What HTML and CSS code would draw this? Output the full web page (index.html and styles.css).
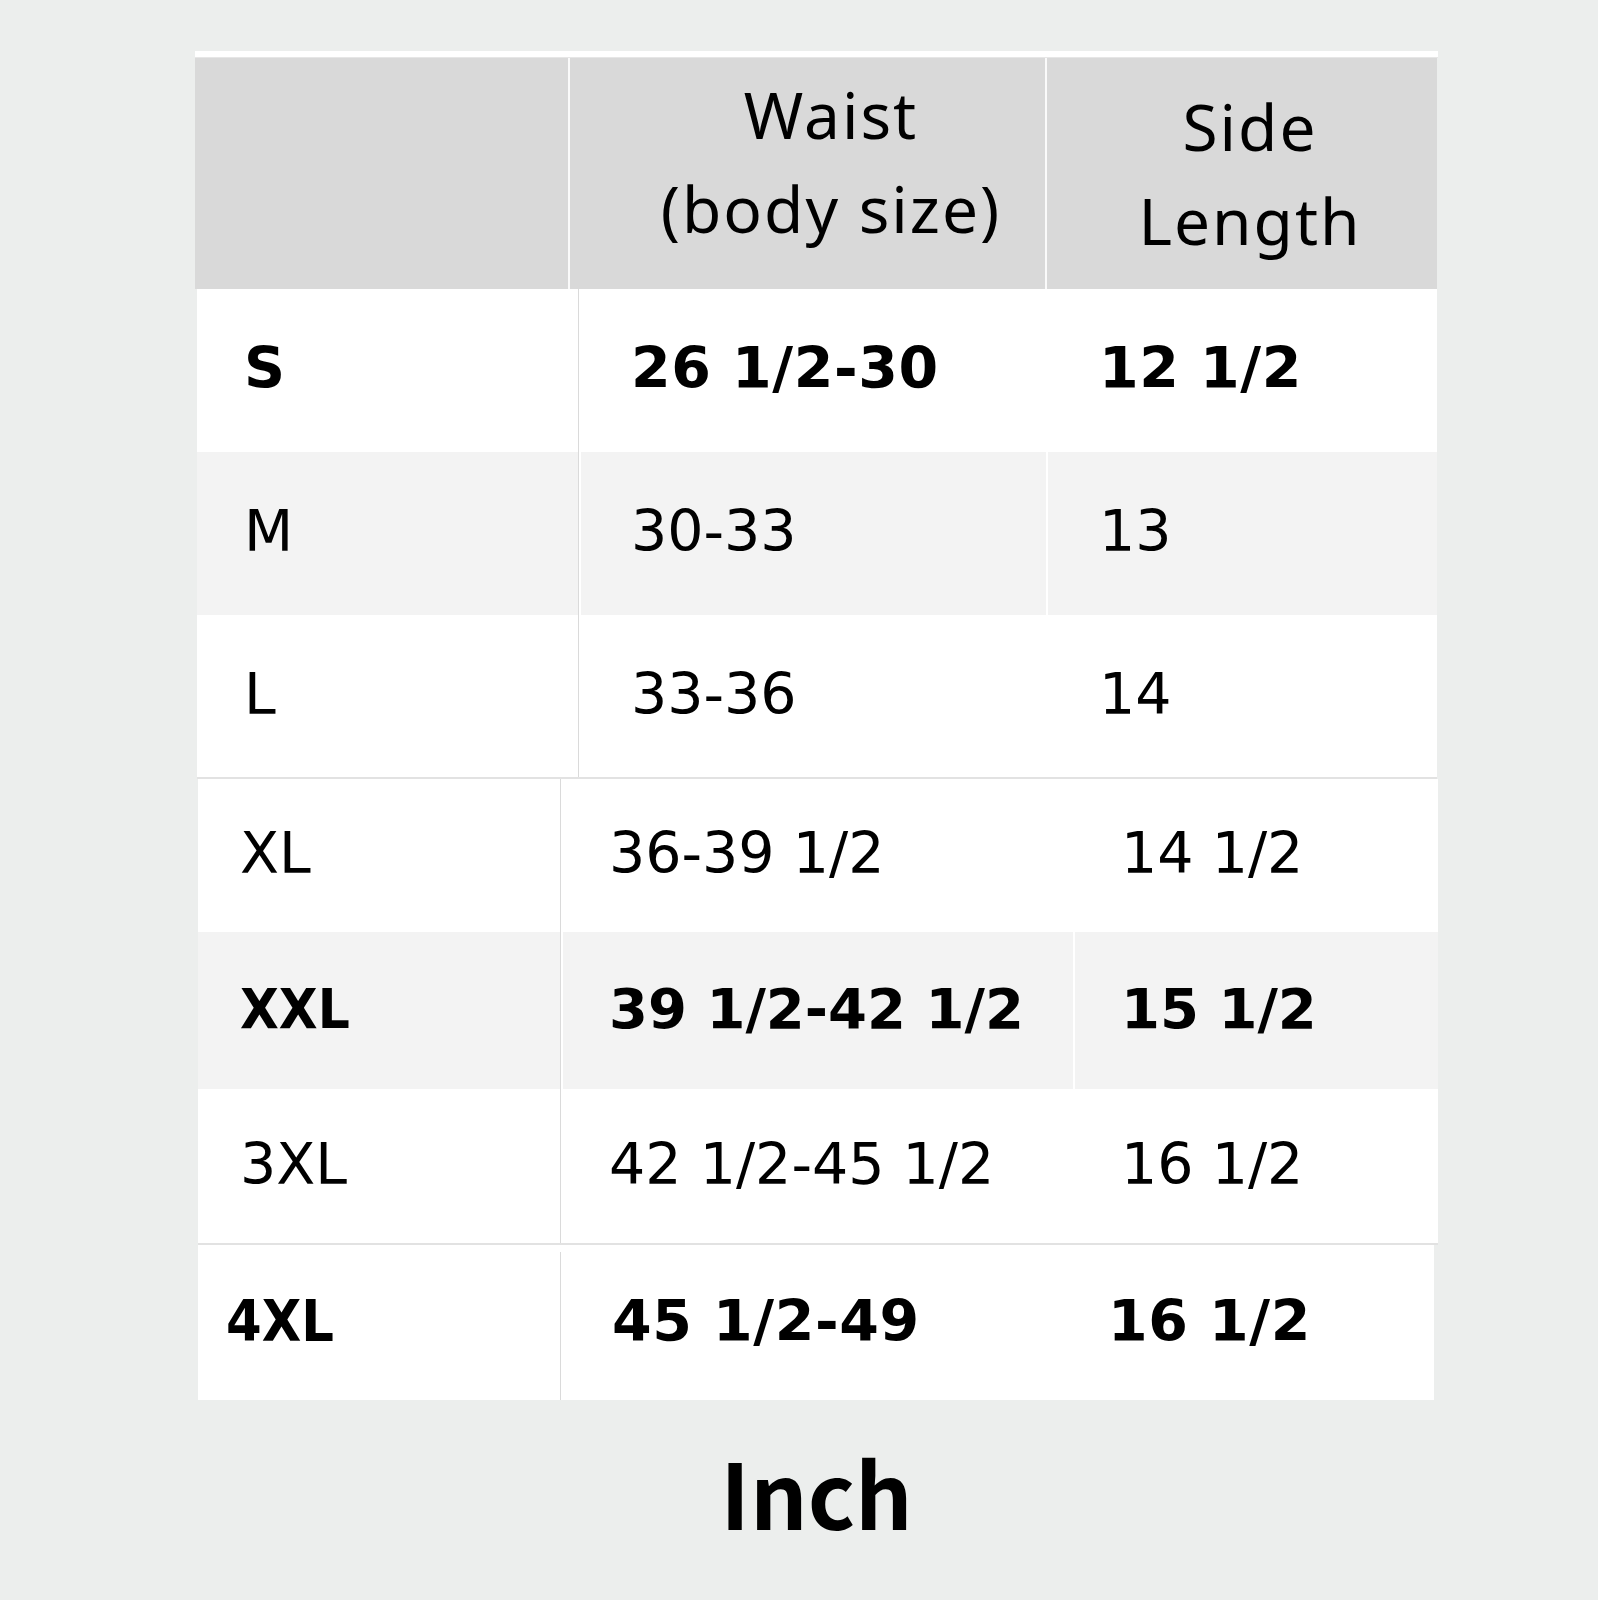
FILE: index.html
```html
<!DOCTYPE html>
<html lang="en">
<head>
<meta charset="utf-8">
<title>Size chart</title>
<link rel="stylesheet" href="styles.css">
</head>
<body>
<div class="chart">
  <div class="topbar"></div>
  <div class="head">
    <div class="hcell"></div>
    <div class="hcell waist">Waist<br>(body size)</div>
    <div class="hcell side">Side<br>Length</div>
  </div>

  <div class="group g1">
    <div class="row">
      <div class="cell c1 b">S</div><div class="cell c2 b">26 1/2-30</div><div class="cell c3 b">12 1/2</div>
    </div>
    <div class="row alt">
      <div class="cell c1">M</div><div class="cell c2">30-33</div><div class="cell c3">13</div>
    </div>
    <div class="row last">
      <div class="cell c1">L</div><div class="cell c2">33-36</div><div class="cell c3">14</div>
    </div>
  </div>
  <div class="sep s1"></div>

  <div class="group g2">
    <div class="row r1">
      <div class="cell c1">XL</div><div class="cell c2">36-39 1/2</div><div class="cell c3">14 1/2</div>
    </div>
    <div class="row alt r2">
      <div class="cell c1 b tight">XXL</div><div class="cell c2 b">39 1/2-42 1/2</div><div class="cell c3 b">15 1/2</div>
    </div>
    <div class="row r3">
      <div class="cell c1">3XL</div><div class="cell c2">42 1/2-45 1/2</div><div class="cell c3">16 1/2</div>
    </div>
  </div>
  <div class="sep s2"></div>

  <div class="group g3">
    <div class="row">
      <div class="cell c1 b tight">4XL</div><div class="cell c2 b">45 1/2-49</div><div class="cell c3 b">16 1/2</div>
    </div>
  </div>

  <div class="title">Inch</div>
</div>
</body>
</html>
```

FILE: styles.css
```css
html, body {
  margin: 0;
  padding: 0;
  background: #eceeed;
}

.chart {
  width: 1243px;
  margin-left: 195px;
  padding-top: 51px;
  color: #000;
}

.topbar {
  height: 7px;
  background: #fff;
  border-bottom: 1px solid #e6e6e6;
  box-sizing: border-box;
}

/* header */
.head {
  display: grid;
  grid-template-columns: 373px 475px 390px;
  column-gap: 2px;
  height: 231px;
  width: 1242px;
  background: #fafafa;
}
.hcell {
  background: #d9d9d9;
  display: flex;
  align-items: center;
  justify-content: center;
  text-align: center;
  font-family: "Noto Sans", "DejaVu Sans", sans-serif;
  font-size: 64px;
  line-height: 94px;
  letter-spacing: 2px;
  font-weight: 400;
  box-sizing: border-box;
}
.waist {
  padding-left: 47px;
  padding-bottom: 24px;
}
.side {
  padding-left: 16px;
}

/* body */
.group {
  background: #fff;
}
.row {
  display: grid;
  font-family: "DejaVu Sans", Verdana, sans-serif;
  font-size: 57px;
  line-height: 1;
}
.cell {
  display: flex;
  align-items: center;
  box-sizing: border-box;
  white-space: nowrap;
  padding-bottom: 4px;
}
.b { font-weight: 700; letter-spacing: 0.6px; }
.b.tight {
  font-family: "DejaVu Sans Condensed", "DejaVu Sans", sans-serif;
  letter-spacing: 0;
}
.alt .cell { background-color: #f3f3f3; }

.g1 {
  margin-left: 2px;
  width: 1240px;
}
.g1 .row {
  grid-template-columns: 381px 468px 391px;
  height: 163px;
}
.g1 .row.last { height: 162px; }
.g1 .c1 { padding-left: 47px; }
.g1 .c2 {
  padding-left: 52px;
  border-left: 1px solid #dadada;
  box-shadow: inset 2px 0 0 #fff;
}
.g1 .c3 { padding-left: 53px; }
.g1 .alt .c3 { border-left: 2px solid #fff; padding-left: 51px; }

.sep {
  height: 2px;
  background: #e2e2e2;
}
.s1 { margin-left: 2px; width: 1240px; }
.s2 { margin-left: 3px; width: 1240px; }

.g2 {
  margin-left: 3px;
  width: 1240px;
}
.g2 .row {
  grid-template-columns: 362px 513px 365px;
}
.g2 .r1 { height: 153px; }
.g2 .r2 { height: 157px; font-size: 56px; }
.g2 .r2 .c2, .g2 .r2 .c3 { letter-spacing: 0; }
.g2 .r3 { height: 154px; }
.g2 .c1 { padding-left: 42px; }
.g2 .c2 {
  padding-left: 48px;
  border-left: 1px solid #dadada;
  box-shadow: inset 2px 0 0 #fff;
}
.g2 .c3 { padding-left: 48px; }
.g2 .alt .c3 { border-left: 2px solid #fff; padding-left: 46px; }

.g3 {
  margin-left: 3px;
  width: 1236px;
  padding-top: 2px;
}
.g3 .row {
  grid-template-columns: 362px 513px 361px;
  height: 153px;
}
.g3 .c1 { padding-left: 28px; }
.g3 .c2 {
  padding-left: 52px;
  background: linear-gradient(#dadada, #dadada) left 5px / 1px calc(100% - 5px) no-repeat;
}
.g3 .c3 { padding-left: 35px; }

.title {
  text-align: center;
  font-family: "Noto Sans CJK JP", "Noto Sans", sans-serif;
  font-weight: 700;
  font-size: 90px;
  line-height: 100px;
  margin-top: 41px;
}
```
